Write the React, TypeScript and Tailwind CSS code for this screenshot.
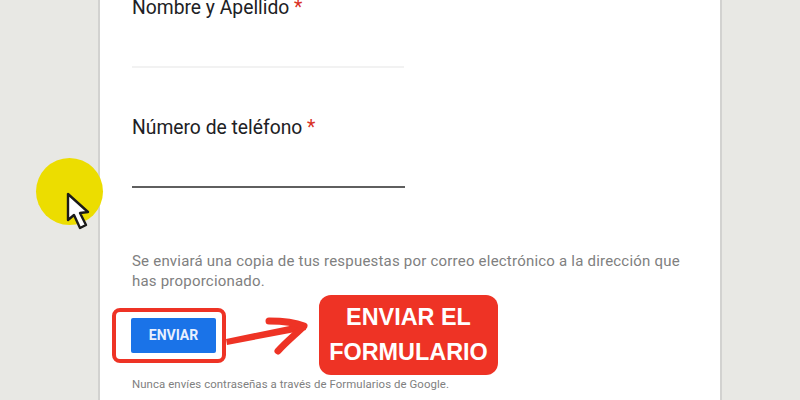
export default function App() {
  return (
    <div className="relative flex h-[400px] w-[800px] overflow-hidden bg-[#e8e8e4] font-['Roboto',sans-serif]">
      {/* Form card */}
      <div className="ml-[98px] flex h-full w-[624px] flex-col border-x-2 border-[#d2d2d0] bg-white pl-[32px]">
        <div className="mt-[-4px] text-[19.3px] leading-[24px] text-[#202124]">
          Nombre y Apellido <span className="text-[#d93025]">*</span>
        </div>
        <div className="mt-[46px] h-[2px] w-[272px] bg-[#f2f2f2]" />

        <div className="mt-[48px] text-[19.3px] leading-[24px] text-[#202124]">
          Número de teléfono <span className="text-[#d93025]">*</span>
        </div>
        <div className="mt-[46px] h-[2px] w-[273px] bg-[#5f5f5f]" />

        <p className="mt-[63px] w-[560px] text-[15px] leading-[20px] tracking-[0.21px] text-[#808080]">
          Se enviará una copia de tus respuestas por correo electrónico a la dirección que has proporcionado.
        </p>

        <div className="ml-[-20px] mt-[4px] flex items-center">
          <div className="flex h-[55px] w-[114px] items-center rounded-[8px] border-[4px] border-[#ee3325] bg-white pl-[15px]">
            <div className="flex h-[35px] w-[85px] items-center justify-center rounded-[2px] bg-[#1a73e8] text-[14px] font-bold text-[#e8f0fe]">
              ENVIAR
            </div>
          </div>
          <svg viewBox="0 0 93 46" className="h-[46px] w-[93px] shrink-0" aria-hidden="true">
            <path d="M0 27 L78 11 L80 18 L1 33 Z" fill="#ee3325" />
            <path
              d="M43 9 C56 9 68 10 78 14 C70 22 60 30 52 39"
              fill="none"
              stroke="#ee3325"
              strokeWidth="7"
              strokeLinecap="round"
              strokeLinejoin="round"
            />
          </svg>
          <div className="flex h-[80px] w-[179px] items-center justify-center rounded-[12px] bg-[#ee3325] text-center font-['Liberation_Sans',sans-serif] text-[23.4px] font-bold leading-[35px] text-white">
            ENVIAR EL
            <br />
            FORMULARIO
          </div>
        </div>

        <p className="mt-[1px] text-[11.4px] leading-[16px] tracking-[0.08px] text-[#808080]">
          Nunca envíes contraseñas a través de Formularios de Google.
        </p>
      </div>

      {/* Cursor highlight */}
      <div className="absolute left-[36px] top-[158px] h-[67px] w-[67px] rounded-full bg-[#ecdd00]" />
      <svg viewBox="0 0 26 38" className="absolute left-[66px] top-[189px] h-[44px] w-[26px]" aria-hidden="true">
        <path
          d="M2 2 L2 28 L8 23 L14 36 L20 33 L14 21 L22 20 Z"
          fill="#fff"
          stroke="#1a1a1a"
          strokeWidth="2.4"
          strokeLinejoin="round"
        />
      </svg>
    </div>
  )
}
